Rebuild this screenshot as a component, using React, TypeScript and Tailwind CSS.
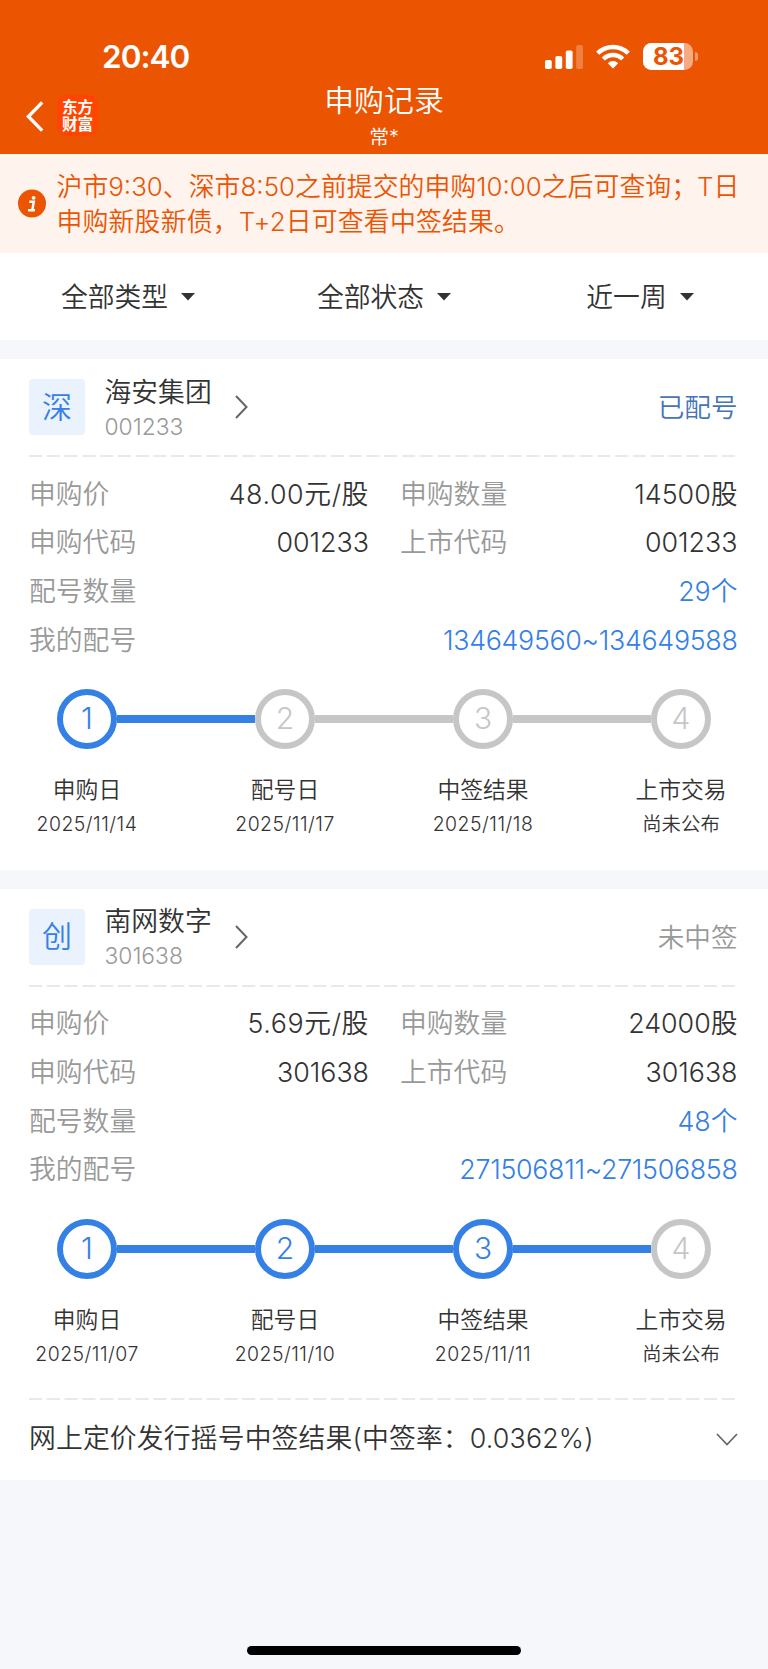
interface Step {
  label: string;
  date: string;
}

interface RecordItem {
  market: string;
  name: string;
  code: string;
  status: string;
  statusClass: string;
  price: string;
  amount: string;
  count: string;
  range: string;
  // number of highlighted circles / connecting lines
  doneSteps: number;
  doneLines: number;
  steps: Step[];
  result?: string;
}

const records: RecordItem[] = [
  {
    market: '深',
    name: '海安集团',
    code: '001233',
    status: '已配号',
    statusClass: 'text-[#4674b8]',
    price: '48.00元/股',
    amount: '14500股',
    count: '29个',
    range: '134649560~134649588',
    doneSteps: 1,
    doneLines: 1,
    steps: [
      { label: '申购日', date: '2025/11/14' },
      { label: '配号日', date: '2025/11/17' },
      { label: '中签结果', date: '2025/11/18' },
      { label: '上市交易', date: '尚未公布' },
    ],
  },
  {
    market: '创',
    name: '南网数字',
    code: '301638',
    status: '未中签',
    statusClass: 'text-[#999]',
    price: '5.69元/股',
    amount: '24000股',
    count: '48个',
    range: '271506811~271506858',
    doneSteps: 3,
    doneLines: 3,
    steps: [
      { label: '申购日', date: '2025/11/07' },
      { label: '配号日', date: '2025/11/10' },
      { label: '中签结果', date: '2025/11/11' },
      { label: '上市交易', date: '尚未公布' },
    ],
    result: '网上定价发行摇号中签结果(中签率：0.0362%)',
  },
];

function StatusBar() {
  return (
    <div className="flex h-[27px] items-center justify-between pr-[70.5px] pl-[102px] text-white">
      <span className="text-[31.5px] leading-[27px] font-semibold tracking-[-1px]">20:40</span>
      <div className="flex items-center">
        <svg width="38" height="24" viewBox="0 0 38 24" fill="currentColor">
          <rect x="0" y="15" width="6.8" height="9" rx="1.8" />
          <rect x="10.4" y="11" width="6.8" height="13" rx="1.8" />
          <rect x="20.8" y="5.5" width="6.8" height="18.5" rx="1.8" />
          <rect x="31.2" y="0" width="6.8" height="24" rx="1.8" opacity="0.25" />
        </svg>
        <svg className="ml-[13px]" width="34" height="25" viewBox="0 0 34 25" fill="none" stroke="currentColor" strokeWidth="4.4">
          <path d="M1.7 9.2a21.8 21.8 0 0 1 30.6 0" />
          <path d="M7.3 15a13.8 13.8 0 0 1 19.4 0" />
          <path d="M17 24.5l-5.2-5.3a7.5 7.5 0 0 1 10.4 0z" fill="currentColor" stroke="none" />
        </svg>
        <div className="relative ml-[13px] h-[27px] w-[50px] overflow-hidden rounded-[8.5px] bg-[#f6aa82]">
          <div className="h-full w-[41px] bg-white" />
          <span className="absolute inset-0 pl-[1px] text-center text-[24px] leading-[27px] font-bold text-[#eb5502]">83</span>
        </div>
        <div className="ml-[1.5px] h-[9px] w-[3px] rounded-r-full bg-[#f29a6c]" />
      </div>
    </div>
  );
}

function Header() {
  return (
    <header className="h-[154px] bg-[#eb5502] pt-[43px] text-white">
      <StatusBar />
      <div className="grid grid-cols-[1fr_auto_1fr]">
        <div className="flex items-start pt-[25px] pl-[26px]">
          <svg className="mt-[6px]" width="18" height="31" viewBox="0 0 18 31" fill="none" stroke="currentColor" strokeWidth="3.4">
            <path d="M16.2 1.4L2.4 15.5l13.8 14.1" />
          </svg>
          <div className="ml-[13px] flex h-[41px] w-[41px] flex-col items-center justify-center rounded-[9px] bg-[#ff4500] text-[15.6px] leading-[17px] font-bold">
            <span>东方</span>
            <span>财富</span>
          </div>
        </div>
        <div className="flex flex-col items-center pt-[10px]">
          <h1 className="text-[29.9px] leading-[40px]">申购记录</h1>
          <span className="text-[19.8px] leading-[34px]">常*</span>
        </div>
      </div>
    </header>
  );
}

function Notice() {
  return (
    <div className="flex h-[99px] items-center bg-[#fff3ee] pl-[18px] text-[#eb5502]">
      <svg className="shrink-0" width="28" height="29" viewBox="0 0 28 29">
        <circle cx="14" cy="14.5" r="14" fill="#eb5502" />
        <circle cx="15.6" cy="8.8" r="1.9" fill="#fff" />
        <path d="M11.2 12.8h4.6l-1.5 8.2M10 21.2h7" fill="none" stroke="#fff" strokeWidth="2.4" />
      </svg>
      <p className="ml-[10.5px] text-[25.9px] leading-[35px] whitespace-nowrap">
        沪市9:30、深市8:50之前提交的申购10:00之后可查询；T日
        <br />
        <span className="tracking-[0.15px]">申购新股新债，T+2日可查看中签结果。</span>
      </p>
    </div>
  );
}

function Filters() {
  return (
    <div className="grid h-[87px] grid-cols-3 bg-white text-[26.8px] text-[#333]">
      {['全部类型', '全部状态', '近一周'].map((label) => (
        <button key={label} type="button" className="flex items-center justify-center gap-[13px]">
          <span className="pt-[2px]">{label}</span>
          <svg width="14" height="8" viewBox="0 0 14 8" fill="currentColor">
            <path d="M0 0h14L7 7.6z" />
          </svg>
        </button>
      ))}
    </div>
  );
}

function DashedLine() {
  return (
    <svg className="block" width="706" height="2">
      <path d="M0 1h706" stroke="#e9e9e9" strokeWidth="2" strokeDasharray="13.2 4.56" />
    </svg>
  );
}

function Row({ label, value, className = 'text-[#333]' }: { label: string; value: string; className?: string }) {
  return (
    <div className="flex h-[48.6px] items-center justify-between whitespace-nowrap">
      <dt className="text-[#999]">{label}</dt>
      <dd className={className}>{value}</dd>
    </div>
  );
}

function Stepper({ item }: { item: RecordItem }) {
  return (
    <>
      <div className="mt-[25px] flex h-[60px] items-center pl-[28px]">
        {item.steps.map((step, i) => (
          <div key={step.label} className="flex items-center">
            {i > 0 && (
              <div className={`h-[8px] w-[138px] ${i <= item.doneLines ? 'bg-[#3480e5]' : 'bg-[#c6c6c6]'}`} />
            )}
            <div
              className={`flex h-[60px] w-[60px] items-center justify-center rounded-full border-[6px] text-[30px] ${
                i < item.doneSteps ? 'border-[#3480e5] text-[#3480e5]' : 'border-[#c6c6c6] text-[#c6c6c6]'
              }`}
            >
              {i + 1}
            </div>
          </div>
        ))}
      </div>
      <div className="mt-[24px] -ml-[41px] grid w-[792px] grid-cols-4 text-center text-[#333]">
        {item.steps.map((step) => (
          <div key={step.label}>
            <div className="text-[22.8px] leading-[34px]">{step.label}</div>
            <div className={`text-[19.4px] leading-[35px] ${step.date.includes('/') ? 'tracking-[0.5px]' : ''}`}>
              {step.date}
            </div>
          </div>
        ))}
      </div>
    </>
  );
}

function RecordCard({ item }: { item: RecordItem }) {
  return (
    <section className="mt-[19px] overflow-hidden bg-white pr-[30.5px] pl-[29px]">
      <div className="flex h-[96px] items-center">
        <div className="flex h-[56px] w-[56px] items-center justify-center rounded-[4px] bg-[#eaf2fd] text-[30px] text-[#3480e5]">
          {item.market}
        </div>
        <div className="ml-[19.5px] pt-[3px]">
          <div className="text-[26.8px] leading-[36px] text-[#333]">{item.name}</div>
          <div className="text-[22.8px] leading-[34px] text-[#999]">{item.code}</div>
        </div>
        <svg className="ml-[23px]" width="13" height="24" viewBox="0 0 13 24" fill="none" stroke="#666" strokeWidth="2">
          <path d="M1 1l10.5 11L1 23" />
        </svg>
        <span className={`ml-auto pt-[2px] text-[26.6px] ${item.statusClass}`}>{item.status}</span>
      </div>
      <DashedLine />
      <dl className="mt-[12.6px] text-[26.8px]">
        <div className="grid grid-cols-[340px_337.5px] gap-x-[31px]">
          <Row label="申购价" value={item.price} className="tracking-[0.6px] text-[#333]" />
          <Row label="申购数量" value={item.amount} />
          <Row label="申购代码" value={item.code} />
          <Row label="上市代码" value={item.code} />
        </div>
        <Row label="配号数量" value={item.count} className="text-[#3480e5]" />
        <Row label="我的配号" value={item.range} className="tracking-[-0.3px] text-[#3480e5]" />
      </dl>
      <Stepper item={item} />
      {item.result ? (
        <>
          <div className="mt-[26.4px]">
            <DashedLine />
          </div>
          <div className="flex h-[80px] items-center justify-between text-[26.8px] text-[#333]">
            <span className="pb-[3px] tracking-[0.16px] whitespace-nowrap">{item.result}</span>
            <svg width="22" height="13" viewBox="0 0 22 13" fill="none" stroke="#666" strokeWidth="1.7">
              <path d="M1 1l10 10.5L21 1" />
            </svg>
          </div>
        </>
      ) : (
        <div className="h-[27.6px]" />
      )}
    </section>
  );
}

export default function App() {
  return (
    <div className="flex h-[1669px] w-[768px] flex-col overflow-hidden bg-[#f6f7fa] font-[Inter,'Noto_Sans_CJK_SC',sans-serif] font-[350]">
      <Header />
      <Notice />
      <Filters />
      {records.map((item) => (
        <RecordCard key={item.code} item={item} />
      ))}
      <div className="mx-auto mt-auto mb-[14px] h-[9px] w-[274px] rounded-full bg-black" />
    </div>
  );
}
